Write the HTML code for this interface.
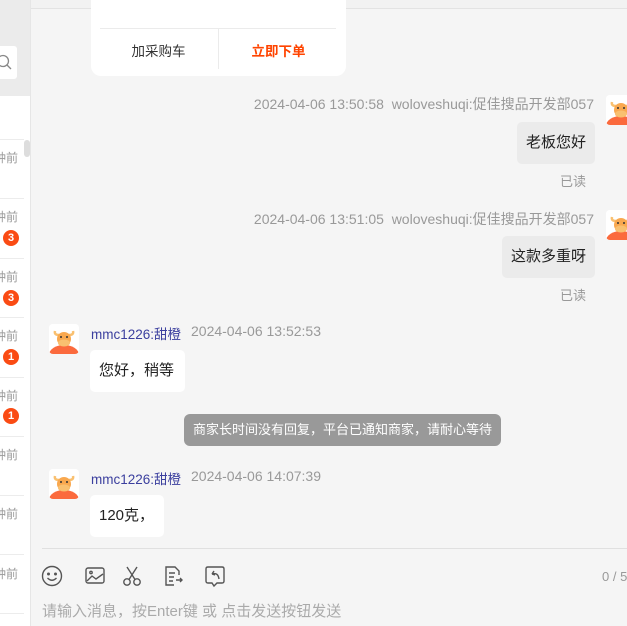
<!DOCTYPE html>
<html><head><meta charset="utf-8"><style>
*{margin:0;padding:0;box-sizing:border-box}
body{width:627px;height:626px;overflow:hidden;background:#f5f5f5;font-family:"Liberation Sans","Noto Sans CJK SC",sans-serif;position:relative}
.a{position:absolute}
.side{left:0;top:0;width:31px;height:626px;background:#fff;border-right:1px solid #e6e6e6}
.sep{left:0;width:30px;height:1px;background:#ececec}
.tm{font-size:12px;color:#999;left:-6px}
.bd{left:3px;width:16px;height:16px;border-radius:50%;background:#fa4b14;color:#fff;font-size:11px;font-weight:bold;text-align:center;line-height:16px}
.ts{font-size:14px;color:#999;white-space:nowrap}
.bub{font-size:15px;color:#222;border-radius:5px;padding:0 9px;height:42px;line-height:42px;white-space:nowrap}
.rd{font-size:13px;color:#999}
.av{width:30px;height:30px;background:#fff;border-radius:4px;overflow:hidden}
.nm{font-size:13.5px;color:#3b3f9e}
</style></head><body>
<div class="a" style="left:31px;top:0;width:596px;height:9px;background:#f2f2f2;border-bottom:1px solid #e3e3e3"></div>
<div class="a side">
 <div class="a" style="left:0;top:0;width:30px;height:96px;background:#ebebeb"></div>
 <div class="a" style="left:-4px;top:46px;width:21px;height:33px;background:#fff;border-radius:3px"></div>
 <svg class="a" style="left:-2px;top:54px" width="16" height="18"><circle cx="5" cy="7" r="5.5" fill="none" stroke="#888" stroke-width="1.3"/><line x1="9" y1="11" x2="13" y2="15" stroke="#888" stroke-width="1.3"/></svg>
 <div class="a" style="left:24px;top:140px;width:6px;height:17px;background:#ddd;border-radius:3px"></div>
 <div class="a sep" style="top:139px;width:24px"></div>
 <div class="a sep" style="top:198px;width:24px"></div>
 <div class="a sep" style="top:258px;width:24px"></div>
 <div class="a sep" style="top:317px;width:24px"></div>
 <div class="a sep" style="top:377px;width:24px"></div>
 <div class="a sep" style="top:436px;width:24px"></div>
 <div class="a sep" style="top:495px;width:24px"></div>
 <div class="a sep" style="top:554px;width:24px"></div>
 <div class="a sep" style="top:613px;width:24px"></div>
 <div class="a tm" style="top:149px">钟前</div>
 <div class="a tm" style="top:208px">钟前</div>
 <div class="a tm" style="top:268px">钟前</div>
 <div class="a tm" style="top:327px">钟前</div>
 <div class="a tm" style="top:387px">钟前</div>
 <div class="a tm" style="top:446px">钟前</div>
 <div class="a tm" style="top:505px">钟前</div>
 <div class="a tm" style="top:565px">钟前</div>
 <div class="a bd" style="top:230px">3</div>
 <div class="a bd" style="top:290px">3</div>
 <div class="a bd" style="top:349px">1</div>
 <div class="a bd" style="top:408px">1</div>
</div>
<div class="a" style="left:91px;top:0;width:255px;height:76px;background:#fff;border-radius:0 0 10px 10px">
 <div class="a" style="left:9px;top:28px;width:236px;height:1px;background:#ebebeb"></div>
 <div class="a" style="left:127px;top:29px;width:1px;height:40px;background:#ebebeb"></div>
 <div class="a" style="left:4px;top:40px;width:127px;text-align:center;font-size:13.5px;color:#333">加采购车</div>
 <div class="a" style="left:124px;top:40px;width:127px;text-align:center;font-size:13.5px;color:#f40;font-weight:bold">立即下单</div>
</div>
<svg width="0" height="0" style="position:absolute"><defs><g id="cow"><rect width="30" height="30" fill="#fff"/><ellipse cx="15" cy="31" rx="15" ry="10" fill="#fb6a3d"/><path d="M6 7 Q5 11 10 11 M24 7 Q25 11 20 11" stroke="#f9c070" stroke-width="2.5" fill="none"/><ellipse cx="15" cy="15" rx="7" ry="7" fill="#f9a84f"/><ellipse cx="15" cy="19" rx="6" ry="3.5" fill="#f9c070"/><circle cx="12" cy="13" r="1" fill="#333"/><circle cx="18" cy="13" r="1" fill="#333"/></g></defs></svg>
<div class="a ts" style="right:33px;top:94px">2024-04-06 13:50:58&nbsp;&nbsp;woloveshuqi:促佳搜品开发部057</div>
<svg class="a av" style="left:606px;top:95px" width="30" height="30"><use href="#cow"/></svg>
<div class="a bub" style="right:32px;top:122px;background:#ebebeb">老板您好</div>
<div class="a rd" style="right:41px;top:171px">已读</div>
<div class="a ts" style="right:33px;top:209px">2024-04-06 13:51:05&nbsp;&nbsp;woloveshuqi:促佳搜品开发部057</div>
<svg class="a av" style="left:606px;top:210px" width="30" height="30"><use href="#cow"/></svg>
<div class="a bub" style="right:32px;top:236px;background:#ebebeb">这款多重呀</div>
<div class="a rd" style="right:41px;top:285px">已读</div>
<svg class="a av" style="left:49px;top:324px" width="30" height="30"><use href="#cow"/></svg>
<div class="a nm" style="left:91px;top:323px">mmc1226:甜橙</div>
<div class="a ts" style="left:191px;top:323px">2024-04-06 13:52:53</div>
<div class="a bub" style="left:90px;top:350px;background:#fff;width:95px">您好，稍等</div>
<div class="a" style="left:184px;top:414px;width:317px;height:32px;background:#999;border-radius:6px;color:#fff;font-size:13px;line-height:32px;text-align:center">商家长时间没有回复，平台已通知商家，请耐心等待</div>
<svg class="a av" style="left:49px;top:469px" width="30" height="30"><use href="#cow"/></svg>
<div class="a nm" style="left:91px;top:468px">mmc1226:甜橙</div>
<div class="a ts" style="left:191px;top:468px">2024-04-06 14:07:39</div>
<div class="a bub" style="left:90px;top:495px;background:#fff;width:74px">120克，</div>
<div class="a" style="left:42px;top:548px;width:585px;height:1px;background:#e0e0e0"></div>
<svg class="a" style="left:40px;top:565px" width="200" height="24" fill="none" stroke="#555" stroke-width="1.4">
 <circle cx="12" cy="11" r="9.5"/><circle cx="8.5" cy="9" r=".8" fill="#555"/><circle cx="15.5" cy="9" r=".8" fill="#555"/><path d="M7.5 13 Q12 17.5 16.5 13"/>
 <rect x="46" y="3" width="18" height="15" rx="2"/><path d="M47 16 L52 11 L56 14 L63 9"/><circle cx="51" cy="7.5" r="1.2"/>
 <circle cx="87" cy="17" r="3.2"/><circle cx="97" cy="17" r="3.2"/><path d="M89 14.5 L97 2 M95 14.5 L87 2"/>
 <path d="M134 20 H126 V2 H135 L139 6 V10 M129 8 H135 M129 12 H134 M129 16 H133 M136 15 H142 M140 13 L142 15 L140 17"/>
 <path d="M168 2 H182 Q184 2 184 4 V16 Q184 18 182 18 H177 L174 21 L172 18 H168 Q166 18 166 16 V4 Q166 2 168 2 Z M172 9 L174 6 M172 9 L175 10 M172 9 Q178 7 179 14"/>
</svg>
<div class="a" style="left:602px;top:569px;font-size:13px;color:#999;white-space:nowrap">0 / 5</div>
<div class="a" style="left:42px;top:600px;font-size:15px;color:#aaa;white-space:nowrap">请输入消息，按Enter键 或 点击发送按钮发送</div>
</body></html>
